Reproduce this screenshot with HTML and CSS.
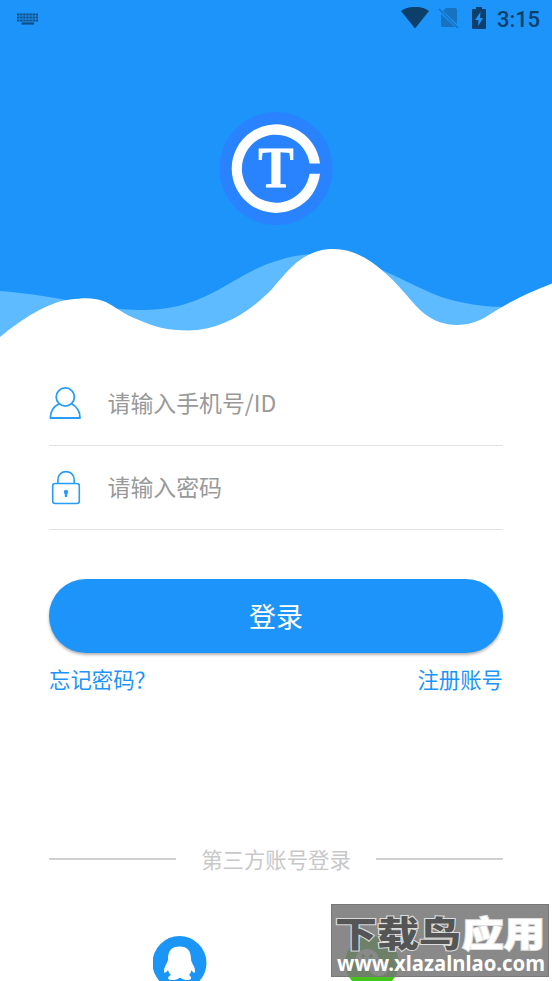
FILE: index.html
```html
<!DOCTYPE html>
<html lang="zh-CN">
<head>
<meta charset="utf-8">
<title>登录</title>
<link rel="stylesheet" href="styles.css">
</head>
<body>
<main class="screen">
  <header class="hero">
    <svg class="waves" viewBox="0 0 552 110" aria-hidden="true">
      <path fill="#5fbbff" d="M0 56C25 58 45 61 66 65C86 68 104 74 139 75C170 75 188 69 204 62C230 50 252 32 280 25C294 20 306 19 322 19C348 22 368 28 384 36C414 49 434 62 460 67C478 71 492 72 508 72L552 90V110H0Z"/>
      <path fill="#fff" d="M0 102C22 84 48 67 70 64.500C82 63 93 62 103 66C112 69 118 76 134 83C154 92 168 95.500 188 95.500C220 95 248 79 272 54C279 46 284 39 296 28C310 17 321 14 334 14C352 14 370 24 384 37C398 49 406 60 416 71C428 84 442 90 457 90C476 90 487 81 502 72C519 62 533 56 552 48.500V110H0Z"/>
    </svg>
    <div class="status">
      <svg class="keyboard" width="22" height="12" viewBox="0 0 22 12" aria-hidden="true">
        <g fill="none" stroke="#0f4e82" stroke-width="2.200"><path stroke-dasharray="2.4 .7" d="M0 1.500H21.500M0 4.500H21.500M0 7.500H21.500"/><path d="M4.500 10.500H17"/></g>
      </svg>
      <div class="indicators">
        <svg width="28" height="22" viewBox="0 0 28 22" aria-hidden="true"><path fill="#0d3f6b" d="M0 4C8-1.600 20-1.600 28 4L14 21.500Z"/></svg>
        <svg class="sim" width="22" height="22" viewBox="0 0 22 22" aria-hidden="true"><path fill="#1773bf" d="M8 1H17Q19 1 19 3V17L5 4ZM3 7L17 20H5Q3 20 3 18Z"/><path stroke="#1773bf" stroke-width="1.600" d="M1 2L20 21"/></svg>
        <svg class="battery" width="14" height="22" viewBox="0 0 14 22" aria-hidden="true"><path fill="#0d3f6b" d="M4 0H10V2H13Q14 2 14 3V21Q14 22 13 22H1Q0 22 0 21V3Q0 2 1 2H4Z"/><path fill="#1c94f9" d="M8.500 5L3 13H6.300V19L11 11H8Z"/></svg>
        <span class="time">3:15</span>
      </div>
    </div>
    <svg class="logo" width="114" height="114" viewBox="0 0 114 114" role="img" aria-label="T">
      <circle cx="57" cy="56.500" r="56.500" fill="#2a83fe"/>
      <path fill="#fff" d="M101 51.500A44.300 44.300 0 1 0 101 61.800H90.500A34 34 0 1 1 90.500 51.500Z"/>
      <text class="logo-letter" x="57" y="74.500" text-anchor="middle" textLength="35.500" lengthAdjust="spacingAndGlyphs">T</text>
    </svg>
  </header>

  <form class="login">
    <label class="field">
      <svg width="34" height="36" viewBox="0 0 34 36" fill="none" stroke="#289cfa" stroke-width="1.800" aria-hidden="true"><circle cx="16.300" cy="11" r="9.100"/><path stroke-linejoin="round" d="M10.500 17.500C4.500 20.500 1.400 25.500 1.400 32H31C31 25.500 28 20.500 22.100 17.500"/></svg>
      <input type="text" placeholder="请输入手机号/ID">
    </label>
    <label class="field">
      <svg width="34" height="36" viewBox="0 0 34 36" fill="none" stroke="#289cfa" stroke-width="1.600" aria-hidden="true"><rect x="3.700" y="13.500" width="26.600" height="20" rx="2.500"/><path d="M8.900 13.500V10C8.900-1.200 25.200-1.200 25.200 10V13.500"/><circle cx="17" cy="22" r="2.200" fill="#289cfa" stroke="none"/><path stroke-width="2.400" d="M17 21.500V27"/></svg>
      <input type="password" placeholder="请输入密码">
    </label>
    <button class="submit" type="button">登录</button>
    <nav class="links"><a>忘记密码？</a><a>注册账号</a></nav>
  </form>

  <div class="divider"><span>第三方账号登录</span></div>
  <div class="providers">
    <svg width="54" height="54" viewBox="0 0 54 54" role="img" aria-label="QQ"><circle cx="26.500" cy="27" r="27" fill="#1c96f6"/><path fill="#fff" d="M26.500 10.500C18.500 10.500 15 15 15 23C15 27 11 30 11 35C11 38 13 37 15 34Q15.500 37 18 39C14 41 14 44 19 44Q24 44 26 42H28Q30 44 35 44C39 44 39 41 36 39Q38 37 38.500 34C40 37 42 38 42 35C42 30 38 27 38 23C38 15 34.500 10.500 26.500 10.500Z"/></svg>
    <svg width="54" height="54" viewBox="0 0 54 54" role="img" aria-label="WeChat"><circle cx="27" cy="27" r="27" fill="#45c51b"/><ellipse cx="22" cy="23" rx="11.500" ry="10" fill="#fff"/><ellipse cx="34" cy="32" rx="10" ry="8.500" fill="#fff" stroke="#45c51b"/><g fill="#45c51b"><circle cx="18" cy="20" r="1.800"/><circle cx="26" cy="20" r="1.800"/></g></svg>
  </div>

  <aside class="watermark">
    <svg width="219" height="73" viewBox="0 0 219 73">
      <g class="brand"><text x="4" y="43" textLength="126" lengthAdjust="spacingAndGlyphs" fill="#555">下载鸟</text><text x="131" y="43" textLength="83" lengthAdjust="spacingAndGlyphs" fill="#fff">应用</text></g>
      <text class="site" x="6" y="67" textLength="208" lengthAdjust="spacingAndGlyphs">www.xlazalnlao.com</text>
    </svg>
  </aside>
</main>
</body>
</html>
```
FILE: styles.css
```css
* { box-sizing: border-box; }
body {
  margin: 0;
  height: 981px;
  overflow: hidden;
  background: #fff;
  font-family: "Noto Sans CJK SC", sans-serif;
}
.screen {
  position: relative;
  height: 981px;
  overflow: hidden;
  display: flex;
  flex-direction: column;
}
.hero {
  position: relative;
  flex: none;
  height: 345px;
  background: #1c94f9;
  display: flex;
  flex-direction: column;
  align-items: center;
}
.waves { position: absolute; left: 0; bottom: 0; width: 552px; height: 110px; }
.status {
  width: 100%;
  height: 36px;
  padding: 0 12px 0 17px;
  display: flex;
  justify-content: space-between;
  align-items: center;
}
.keyboard { margin-top: 1px; }
.indicators { display: flex; align-items: center; }
.sim { margin-left: 9px; }
.battery { margin-left: 12px; }
.time {
  margin: 3px 0 0 11px;
  font: 500 22px/26px Roboto, sans-serif;
  color: #0d3f6b;
  letter-spacing: -.1px;
}
.logo { margin-top: 76px; z-index: 1; }
.logo-letter {
  font: bold 56px "Liberation Serif", serif;
  fill: #fff;
  stroke: #fff;
  stroke-width: .8px;
}
.login { padding: 17px 49px 0; }
.field {
  height: 84px;
  display: flex;
  align-items: center;
  gap: 24.5px;
  border-bottom: 1px solid #e3e3e3;
}
.field svg { flex: none; }
.field input {
  flex: 1;
  min-width: 0;
  height: 40px;
  margin-bottom: 4px;
  padding: 0;
  border: 0;
  outline: 0;
  background: none;
  font: 22.9px/40px "Noto Sans CJK SC", sans-serif;
}
.field input::placeholder { color: #999; opacity: 1; }
.submit {
  display: block;
  width: 100%;
  height: 74px;
  margin-top: 49px;
  padding: 0;
  border: 0;
  border-radius: 37px;
  background: #1c94f9;
  box-shadow: 0 2px 3px rgba(0, 0, 0, .3);
  color: #fff;
  font: 27px/74px "Noto Sans CJK SC", sans-serif;
}
.links {
  display: flex;
  justify-content: space-between;
  margin-top: 10px;
  color: #1c94f9;
  font-size: 21.4px;
  line-height: 32px;
}
.divider {
  display: flex;
  align-items: center;
  gap: 25px;
  margin: 148px 49px 0;
  color: #c8c8c8;
  font-size: 21.4px;
  line-height: 32px;
}
.divider::before, .divider::after { content: ""; flex: 1; height: 2px; background: #d0d0d0; }
.providers {
  display: flex;
  justify-content: space-between;
  padding: 0 153px;
  margin-top: 61px;
}
.watermark {
  position: absolute;
  left: 331px;
  top: 904px;
  width: 218px;
  height: 73px;
  background: rgba(118, 118, 118, .86);
  border: 1px solid #777;
}
.watermark svg { display: block; margin: -1px; }
.brand text {
  font: 800 35px "Noto Sans CJK SC", sans-serif;
  stroke: #ddd;
  stroke-width: 2px;
  paint-order: stroke;
}
.site { font: bold 21px "Noto Sans", sans-serif; fill: #fff; }
```
